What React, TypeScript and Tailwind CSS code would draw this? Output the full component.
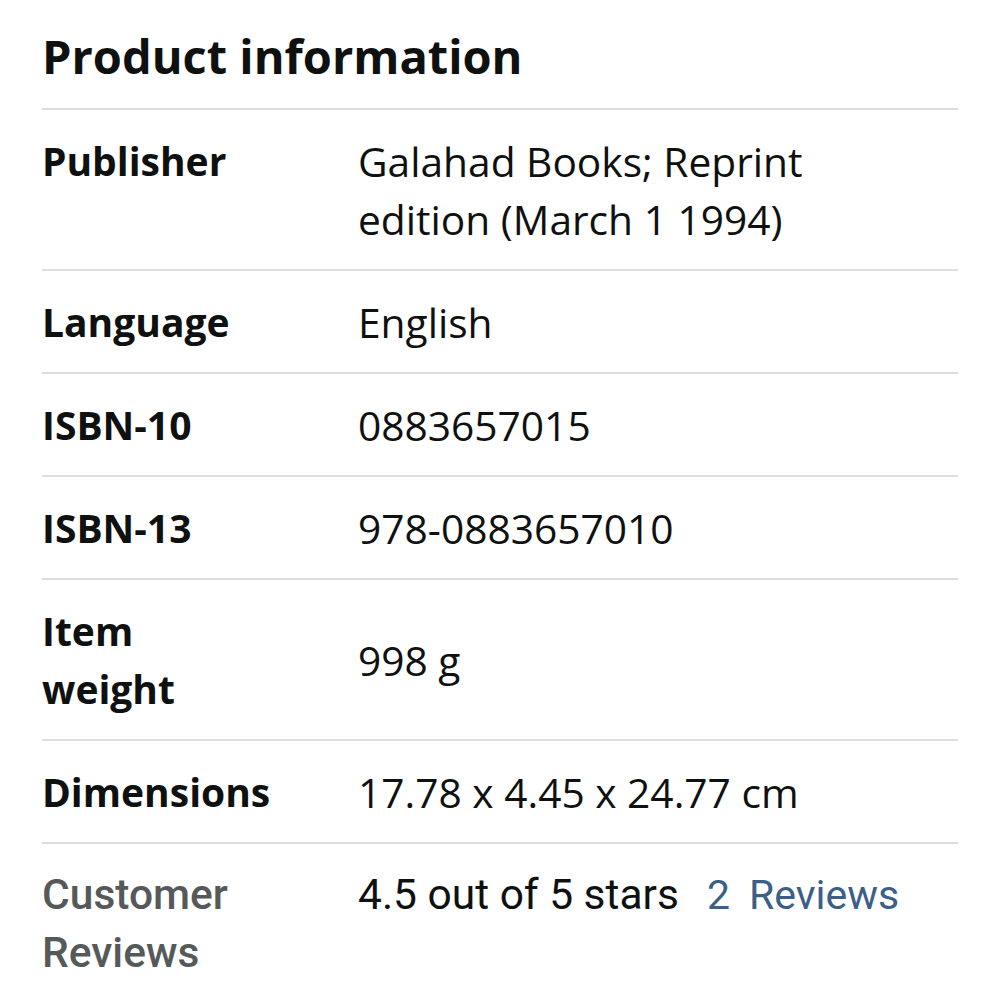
import React from "react";

const rows: { label: string; value: string; top?: boolean }[] = [
  { label: "Publisher", value: "Galahad Books; Reprint edition (March 1 1994)", top: true },
  { label: "Language", value: "English" },
  { label: "ISBN-10", value: "0883657015" },
  { label: "ISBN-13", value: "978-0883657010" },
  { label: "Item weight", value: "998 g" },
  { label: "Dimensions", value: "17.78 x 4.45 x 24.77 cm" },
];

export default function App() {
  return (
    <div
      className="w-[1000px] h-[1000px] bg-white overflow-hidden px-[42px] text-[#0f1111]"
      style={{ fontFamily: '"Open Sans", "Noto Sans", sans-serif' }}
    >
      <h2 className="pt-[27px] pb-[23px] text-[47px] leading-[58px] font-bold border-b-2 border-[#dcdfdf]">
        Product information
      </h2>
      {rows.map((r) => (
        <div
          key={r.label}
          className={
            r.top
              ? "flex items-start pt-[22px] pb-[21px] border-b-2 border-[#dcdfdf] leading-[58px]"
              : "flex items-center pt-[22px] pb-[21px] border-b-2 border-[#dcdfdf] leading-[58px]"
          }
        >
          <div className="w-[316px] shrink-0 font-bold pr-[20px] text-[39px]">
            {r.label === "Item weight" ? (
              <>
                Item
                <br />
                weight
              </>
            ) : (
              r.label
            )}
          </div>
          <div className="w-[540px] text-[40.7px]">{r.value}</div>
        </div>
      ))}
      <div
        className="flex items-start pt-[22px] pb-[21px] text-[42.5px] leading-[58px]"
        style={{ fontFamily: 'Roboto, "Noto Sans", sans-serif' }}
      >
        <div className="w-[316px] shrink-0 font-medium text-[#565959]">
          Customer
          <br />
          Reviews
        </div>
        <div className="flex items-center">
          <span>4.5 out of 5 stars</span>
          <span className="ml-[28px] text-[41px] text-[#3b5f87]">2</span>
          <span className="ml-[19px] text-[41px] text-[#3b5f87]">Reviews</span>
        </div>
      </div>
    </div>
  );
}
